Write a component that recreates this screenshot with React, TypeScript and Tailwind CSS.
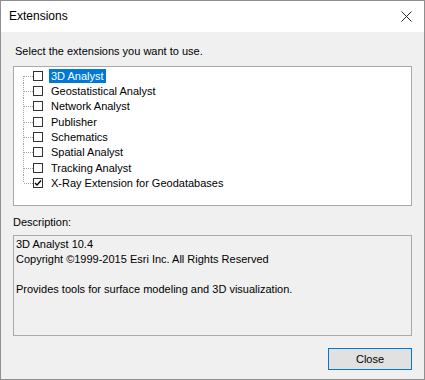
import React from "react";

const items = [
  { label: "3D Analyst", checked: false, selected: true },
  { label: "Geostatistical Analyst", checked: false },
  { label: "Network Analyst", checked: false },
  { label: "Publisher", checked: false },
  { label: "Schematics", checked: false },
  { label: "Spatial Analyst", checked: false },
  { label: "Tracking Analyst", checked: false },
  { label: "X-Ray Extension for Geodatabases", checked: true },
];

function Connector({ first, last }: { first: boolean; last: boolean }) {
  return (
    <svg width="19" height="16" viewBox="0 0 19 16" className="shrink-0" shapeRendering="crispEdges">
      <line
        x1="9.5"
        y1={first ? 8 : 0}
        x2="9.5"
        y2={last ? 8 : 16}
        stroke="#a0a0a0"
        strokeWidth="1"
        strokeDasharray="1 1"
      />
      <line x1="10" y1="8.5" x2="19" y2="8.5" stroke="#a0a0a0" strokeWidth="1" strokeDasharray="1 1" />
    </svg>
  );
}

function Box({ checked }: { checked: boolean }) {
  return (
    <div className="w-[10px] h-[10px] border border-[#333333] bg-white shrink-0 flex items-center justify-center">
      {checked && (
        <svg width="8" height="8" viewBox="0 0 8 8">
          <path d="M1 4 L3 6 L7 1.5" stroke="#000" strokeWidth="1.4" fill="none" />
        </svg>
      )}
    </div>
  );
}

export default function App() {
  return (
    <div
      className="w-[425px] h-[380px] border border-[#8f8f8f] bg-[#f0f0f0] flex flex-col text-[11px] text-black"
      style={{ fontFamily: '"Liberation Sans", Arial, sans-serif' }}
    >
      <div className="h-[31px] bg-white flex items-center justify-between pl-[8px] pr-[12px] shrink-0">
        <span className="text-[12px] leading-[15px]">Extensions</span>
        <svg width="11" height="11" viewBox="0 0 11 11">
          <path d="M0.5 0.5 L10.5 10.5 M10.5 0.5 L0.5 10.5" stroke="#222" strokeWidth="1" />
        </svg>
      </div>
      <div className="flex flex-col px-[12px]">
        <div className="mt-[12px] pl-[2px] leading-[15px]">Select the extensions you want to use.</div>
        <div className="mt-[7px] h-[140px] border border-[#a9a9a9] bg-white pt-[1px] flex flex-col">
          {items.map((it, i) => (
            <div key={it.label} className="h-[15.33px] flex items-center">
              <Connector first={i === 0} last={i === items.length - 1} />
              <Box checked={it.checked} />
              <span
                className={
                  "ml-[6px] px-[2px] leading-[14px] whitespace-nowrap " +
                  (it.selected ? "bg-[#0078d7] text-white" : "")
                }
              >
                {it.label}
              </span>
            </div>
          ))}
        </div>
        <div className="mt-[9px] leading-[15px]">Description:</div>
        <div className="mt-[5px] h-[101px] border border-[#a9a9a9] bg-[#f0f0f0] pt-[1px] pl-[2px] leading-[15px]">
          <div>3D Analyst 10.4</div>
          <div>Copyright ©1999-2015 Esri Inc. All Rights Reserved</div>
          <div>&nbsp;</div>
          <div>Provides tools for surface modeling and 3D visualization.</div>
        </div>
        <div className="mt-[12px] flex justify-end">
          <button className="w-[84px] h-[22px] border border-[#0078d7] bg-[#e1e1e1] flex items-center justify-center leading-[15px]">
            Close
          </button>
        </div>
      </div>
    </div>
  );
}
